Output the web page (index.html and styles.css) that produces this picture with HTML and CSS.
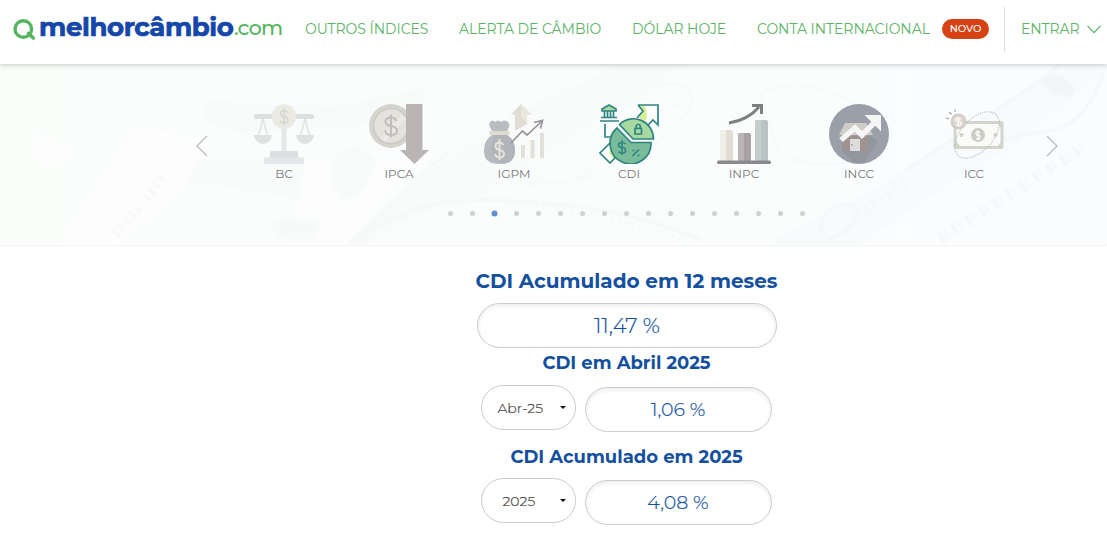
FILE: index.html
```html
<!DOCTYPE html>
<html lang="pt-BR">
<head>
<meta charset="utf-8">
<title>CDI - melhorcâmbio.com</title>
<link rel="stylesheet" href="styles.css">
</head>
<body>
<header class="header">
  <a class="logo">
    <svg class="logo-mark" width="24" height="24" viewBox="0 0 24 24" fill="none" stroke="#57b560" stroke-width="3.4"><circle cx="11.300" cy="11" r="8.300"/><path d="M16.500 15.500 21.300 20" stroke-width="3.600" stroke-linecap="round"/></svg>
    <span class="logo-name">melhorcâmbio</span><span class="logo-tld">.com</span>
  </a>
  <nav class="nav">
    <a class="n1">OUTROS ÍNDICES</a>
    <a class="n2">ALERTA DE CÂMBIO</a>
    <a class="n3">DÓLAR HOJE</a>
    <a class="n4">CONTA INTERNACIONAL</a>
    <span class="badge">NOVO</span>
  </nav>
  <div class="login"><span>ENTRAR</span>
    <svg width="14" height="9" viewBox="0 0 14 9" fill="none" stroke="#5cb367" stroke-width="1.200"><path d="M.5.8 7 7.600 13.500.8"/></svg>
  </div>
</header>

<section class="indices">
  <svg class="notes" width="1107" height="181" viewBox="0 0 1107 181" fill="none">
    <defs>
      <linearGradient id="tint" x2="1"><stop offset="0" stop-color="#fbfdfb"/><stop offset=".45" stop-color="#fbfdfc"/><stop offset="1" stop-color="#fbfcfe"/></linearGradient>
      <filter id="soft" x="-10%" y="-10%" width="120%" height="120%"><feGaussianBlur stdDeviation="1.300"/></filter>
    </defs>
    <path d="M0 0H1107V181H0Z" fill="url(#tint)"/>
    <g filter="url(#soft)" opacity=".65">
      <path d="M135 65 210 76 188 120 115 181H60Z" fill="#fefefe"/>
      <path d="M200 35 330 42 440 20 400 60 240 70 205 58Z" fill="#f7fbfa"/>
      <path d="M198 94 320 98 312 138 188 118Z" fill="#f8fbfa"/>
      <path d="M34 66 73 85 65 101 36 97Z" fill="#fdfefd"/>
      <path d="M305 98 380 88 415 97 345 181H290Z" fill="#fdfefe"/>
      <path d="M335 92Q360 70 376 96Q370 124 342 137Q328 120 335 92Z" fill="#f6faf9"/>
      <path d="M270 160 288 152 300 158 323 157 310 176 278 175Z" fill="#f5f9f8"/>
      <path d="M346 181Q430 100 520 45L620 0H690L470 139Q430 145 400 160L370 181Z" fill="#f8fbfb"/>
      <path d="M362 174Q410 137 470 136Q610 136 700 176M348 181 450 85" stroke="#edf4f3" stroke-width="2"/>
      <path d="M480 134Q600 145 690 180" stroke="#eff5f5" stroke-width="5" stroke-dasharray="2 5"/>
      <path d="M530 120 655 20Q700 15 690 45Q660 90 575 117ZM575 117 690 30M760 30Q820 0 890 70Q850 120 780 90Z" stroke="#f1f7f7" stroke-width="2"/>
      <path d="M762 181 890 115 1017 28 1065 0H1107V10L1030 70 860 181Z" fill="#f7fafc"/>
      <path d="M905 107 1000 44Q1035 20 1060 0M825 150Q815 167 830 175Q845 170 857 153Q860 140 845 140Q835 141 825 150M995 76 1060 65Q1090 50 1103 10" stroke="#eef4f8" stroke-width="2.500"/>
      <ellipse cx="1058" cy="21" rx="18" ry="9" transform="rotate(25 1058 21)" fill="#eef3f7"/>
      <path d="M940 175 1085 82" stroke="#f0f4f8" stroke-width="12" stroke-dasharray="4 3 2 7"/>
      <path d="M865 145 905 120" stroke="#f0f5f8" stroke-width="12" stroke-dasharray="2 7"/>
      <path d="m115 170 26-28m5-7 17-21" stroke="#f3f8f5" stroke-width="10" stroke-dasharray="3 5"/>
      <path d="M0 150H35M0 15 48 20 56 43 38 39Z" stroke="#f8fcf6" stroke-width="7"/>
    </g>
  </svg>
  <div class="carousel">
    <svg class="arrow" width="12" height="22" viewBox="0 0 12 22" fill="none" stroke="#bbbdbd" stroke-width="1.300"><path d="M11 1 1 11 11 21"/></svg>
    <div class="items">
      <div class="item">
        <svg width="60" height="60" viewBox="0 0 60 60"><rect y="10" width="60" height="5" rx="2.500" fill="#dddfe0"/><path d="M27.500 24h5v24h-5z" fill="#e5e8e9"/><path d="M9 15 4.500 31M9 15l4.500 16M51 15l-4.500 16M51 15l4.500 16" stroke="#e2e5e6" stroke-width="1.700"/><path d="M0 31h18a9 9 0 0 1-18 0ZM42 31h18a9 9 0 0 1-18 0Z" fill="#dfe1e3"/><path d="M16 48q0-1 1-1h26q1 0 1 1v6H16Z" fill="#dcdedf"/><path d="M10 53.500h40V60H10Z" fill="#e4e7e9"/><circle cx="30" cy="12.500" r="12.300" fill="#ebeae2"/><path d="M33.500 8.500Q32 6.500 30 6.500Q26.500 6.500 26.500 9.500Q26.500 12 30 12.500Q34 13.500 34 16Q34 19 30 19Q27 19 26 16.500M30 4v17.500" fill="none" stroke="#d5d6d1" stroke-width="1.400"/></svg>
        <span>BC</span>
      </div>
      <div class="item">
        <svg width="60" height="60" viewBox="0 0 60 60"><circle cx="22" cy="22" r="22" fill="#d6d4cf"/><circle cx="22" cy="22" r="17.500" fill="#e3e2dc" stroke="#cbcac7" stroke-width="1.500"/><path d="m11 34 22-23 4 4-21 23Z" fill="#eae9e5"/><path d="M27.500 17Q26 13.500 22 13.500Q16.500 13.500 16.500 17.500Q16.500 21 22 22Q28 23 28 27Q28 31 22 31Q17 31 16 26.500M22 10.500v23" fill="none" stroke="#c1bfbd" stroke-width="2"/><path d="M37 0h16.500v46H60L45.500 60 31 46h6Z" fill="#bbb4b5"/></svg>
        <span>IPCA</span>
      </div>
      <div class="item">
        <svg width="60" height="60" viewBox="0 0 60 60"><path d="M37 0 47.500 10.500H43V20L31 27V10.500H27Z" fill="#dfddd3"/><path d="M37 0v13l6 6v-8.500h4.500Z" fill="#e9e8df"/><path d="M6 18q3-3 5 0 3-3 6 0 4-3 7 0 3 3-1 9H8q-4-6-2-9Z" fill="#b9bdc1"/><path d="M8 31h15q8 5 8 16 0 13-15.500 13T0 47Q0 36 8 31Z" fill="#b7bbc0"/><path d="M12 31h11q8 5 8 16 0 11-11 13Q8 57 7 44q0-9 5-13Z" fill="#b1b5ba"/><rect x="5" y="27" width="21" height="4" rx="2" fill="#dddbd2"/><path d="M19.500 41Q18 38.500 15.500 38.500Q11.500 38.500 11.500 42Q11.500 45 15.500 46Q20 47 20 50Q20 53.500 15.500 53.500Q12 53.500 11 50M15.500 35v21" fill="none" stroke="#e3e2d8" stroke-width="2"/><path d="m27 39 11.500-12 4.500 4L58 17m-8 1.500 8.500-2-2 8" fill="none" stroke="#99979b" stroke-width="1.700"/><path d="M37 41h4v13h-4zM46.500 36h4v18h-4zM56 29h4v25h-4z" fill="#e2e0d8"/></svg>
        <span>IGPM</span>
      </div>
      <div class="item">
        <svg width="60" height="60" viewBox="0 0 60 60" fill="none" stroke="#2e8582" stroke-width="1.700"><path d="m42.500 15 3-6L39 1h20v20l-5-5-5 5Z" fill="#fff" stroke="none"/><path d="M40 2h6q3 9 1 15l-7-3 4-7Z" fill="#d4ee91" stroke="none"/><path d="M39 1h20v20l-5-5-5 5M39 1l5 6-6 7"/><path d="M12 38 1 49l10 10 10-10Z" fill="#fff" stroke="none"/><path d="m12 40-2 8 4 7 6-5Z" fill="#d4ee91" stroke="none"/><path d="M12 38 1 49l10 10 6-6"/><path d="m3 5 7-4 7 4v2H3Z" fill="#a7d9a1"/><path d="M5.500 7v6m3-6v6m3-6v6m3-6v6M2 13.500h16M1 17h19M6 20v13h11"/><path d="M18 24 32 38.500h20A20.500 20.500 0 1 1 18 24Z" fill="#7abc99"/><path d="M20.500 20.500A20 20 0 0 1 54.500 35H34Z" fill="#a7d9a1"/><path d="M36 24.500h6.500V30H36Zm1.200 0v-3q2-2.500 4 0v3"/><path d="m33.500 52 6.500-6.500M33.500 46.500h2m3 5h2" stroke-width="1.600"/><path d="M26.500 40q-1-1.500-3.500-1.500-3.500 0-3.500 2.500t3.500 2.500 3.500 3-3.500 2.500q-2.500 0-3.500-1.500M23 36v15" stroke-width="1.600"/></svg>
        <span>CDI</span>
      </div>
      <div class="item">
        <svg width="60" height="60" viewBox="0 0 60 60"><path d="M6 57V28q0-2 2-2h9q2 0 2 2v29Z" fill="#e0ddd5"/><path d="M6 57V28q0-2 2-2h4v31Z" fill="#f0efe7"/><path d="M24 57V31q0-2 2-2h9q2 0 2 2v26Z" fill="#aaa1a5"/><path d="M24 57V31q0-2 2-2h4v28Z" fill="#b9b4b6"/><path d="M41 57V18q0-2 2-2h9q2 0 2 2v39Z" fill="#b9c4c4"/><path d="M41 57V18q0-2 2-2h4v41Z" fill="#c4cecd"/><rect x="3" y="56.500" width="54" height="3.500" rx="1.500" fill="#8a8a8e"/><path d="M15 19Q34 16 45 3M38 1.500h9.500V10" fill="none" stroke="#7d7f81" stroke-width="3"/></svg>
        <span>INPC</span>
      </div>
      <div class="item">
        <svg width="60" height="60" viewBox="0 0 60 60"><circle cx="30" cy="30" r="30" fill="#9b9fa9"/><path d="m13 47 12 12h10l14-22-9-6Z" fill="#92969f"/><path d="M13 32h26v15H13Z" fill="#a0938f"/><path d="M16 19h21l7 12H10Z" fill="#d0cdc7"/><path d="M21 35h10v12H21Z" fill="#ddd"/><circle cx="23" cy="41" r=".8" fill="#777"/><path d="m12 36 14-12 7 7 15-15" fill="none" stroke="#f5f5f6" stroke-width="5.500"/><path d="M35.500 11H52v16.500l-5-5-6-6Z" fill="#f5f5f6"/></svg>
        <span>INCC</span>
      </div>
      <div class="item">
        <svg width="60" height="60" viewBox="0 0 60 60"><rect x="11" y="18.500" width="47" height="25" rx="1" fill="#fbfcfa" stroke="#d2d5cc" stroke-width="3"/><path d="m12 37 5 6h-5Zm46 0-5 6h5Zm0-12-5-6h5Z" fill="#d2d5cc"/><circle cx="34" cy="31" r="7" fill="#c9cdc4"/><path d="M36 28.500q-4-2-4 .5t2 2 2 2.500-4 1M34 26.500v9" fill="none" stroke="#fff" stroke-width="1.200"/><circle cx="17.500" cy="31" r="2" fill="#cdd2c9"/><circle cx="51.500" cy="31" r="2" fill="#cdd2c9"/><ellipse cx="33" cy="31" rx="28" ry="16" transform="rotate(-47 33 31)" fill="none" stroke="#b8bbbe" stroke-width="1" stroke-dasharray="1.200 1"/><circle cx="14.500" cy="17.500" r="8" fill="#d4cec9"/><circle cx="14.500" cy="17.500" r="5.700" fill="#ddd7d0"/><path d="M17 15q-5-2-5 .5t2.500 2 2.500 2.500-5 .5M14.500 13v9.500" fill="none" stroke="#fff" stroke-width="1.300"/><path d="m2 14 3 .8M5 8l2.500 2.500M11 5.500V8" stroke="#a2a4a4" stroke-width="1.200"/></svg>
        <span>ICC</span>
      </div>
    </div>
    <svg class="arrow" width="12" height="22" viewBox="0 0 12 22" fill="none" stroke="#bbbdbd" stroke-width="1.300"><path d="M1 1 11 11 1 21"/></svg>
  </div>
  <div class="dots"><i></i><i></i><i class="on"></i><i></i><i></i><i></i><i></i><i></i><i></i><i></i><i></i><i></i><i></i><i></i><i></i><i></i><i></i></div>
</section>

<main class="results">
  <h1 class="title t1">CDI Acumulado em 12 meses</h1>
  <div class="value wide">11,47 %</div>
  <h2 class="title t2">CDI em Abril 2025</h2>
  <div class="row">
    <div class="select month"><span>Abr-25</span><i class="caret"></i></div>
    <div class="value">1,06 %</div>
  </div>
  <h2 class="title t3">CDI Acumulado em 2025</h2>
  <div class="row">
    <div class="select year"><span>2025</span><i class="caret"></i></div>
    <div class="value">4,08 %</div>
  </div>
</main>
</body>
</html>
```
FILE: styles.css
```css
* { box-sizing: border-box; }
body { margin: 0; height: 545px; overflow: hidden; background: #fff; font-family: Montserrat, Inter, "Open Sans", sans-serif; }
.header { position: relative; z-index: 2; display: flex; height: 64px; background: #fff; box-shadow: 0 1px 5px rgba(0,0,0,.22); white-space: nowrap; color: #5cb367; }
.logo { display: flex; width: 305px; padding: 9px 0 0 12px; line-height: 36px; }
.logo-mark { flex: none; margin: 9px 3px 0 0; }
.logo-name { flex: none; width: 195px; color: #1447a9; font-size: 26px; font-weight: 700; letter-spacing: -.4px; -webkit-text-stroke: .7px #1447a9; }
.logo-tld { flex: none; color: #57b560; font-size: 21px; font-weight: 500; line-height: 37px; letter-spacing: -.9px; }
.nav { display: flex; width: 699px; padding-top: 19px; font-size: 14px; font-weight: 400; line-height: 20px; }
.nav a { flex: none; letter-spacing: -.05px; }
.n1 { width: 154px; }
.n2 { width: 173px; }
.n3 { width: 125px; }
.n4 { width: 185px; }
.badge { width: 47px; height: 20px; border-radius: 10px; background: #d64213; color: #fff; font-size: 10px; font-weight: 500; line-height: 19px; text-align: center; }
.login { display: flex; align-items: center; gap: 8px; height: 45px; margin-top: 7px; padding: 0 0 0 16px; border-left: 1px solid #ddd; font-size: 14px; letter-spacing: -.1px; }
.login span { width: 58px; line-height: 18px; margin-bottom: 2px; }
.indices { position: relative; height: 181px; box-shadow: 0 1px 2px #f5f3f4; }
.notes { position: absolute; inset: 0; }
.carousel { position: relative; display: flex; justify-content: space-between; width: 862px; margin-left: 196px; padding-top: 40px; }
.arrow { margin-top: 31px; }
.items { display: flex; padding-left: 4px; }
.item { display: flex; flex-direction: column; align-items: center; width: 115px; color: #797979; font-size: 12px; line-height: 19px; }
.item svg { display: block; }
.dots { position: relative; display: flex; justify-content: center; gap: 17px; margin: 28px 0 0 146px; }
.dots i { width: 5px; height: 5px; border-radius: 50%; background: #d0d2d2; }
.dots .on { background: #5f91d6; box-shadow: 0 0 0 .5px #5f91d6; }
.results { display: flex; flex-direction: column; align-items: center; width: 302px; margin: 24px 0 0 476px; margin-top: 23px; color: #14509f; }
.title { margin: 0 1px 0 0; white-space: nowrap; font-weight: 700; }
.t1 { height: 35px; font-size: 20px; line-height: 26px; }
.t2 { height: 37px; font-size: 18px; line-height: 30px; }
.t3 { height: 46px; font-size: 18px; line-height: 51px; }
.value { display: flex; align-items: center; justify-content: center; width: 187px; height: 45px; margin-top: 2px; border: 1px solid #ccc; border-radius: 23px; box-shadow: inset 0 2px 4px rgba(0,0,0,.08); background: #fff; font-size: 19px; font-weight: 300; -webkit-text-stroke: .2px; }
.wide { width: 300px; margin-top: 0; font-size: 21px; }
.row { display: flex; gap: 9px; height: 47px; margin-right: 2px; }
.select { display: flex; align-items: center; justify-content: space-between; width: 95px; height: 45px; padding: 0 9px 0 16px; border: 1px solid #ccc; border-radius: 23px; color: #444; font-size: 14px; font-weight: 300; -webkit-text-stroke: .2px; }
.year { padding-left: 21px; }
.caret { border: 3px solid transparent; border-top-color: #111; border-bottom: 0; }
```
